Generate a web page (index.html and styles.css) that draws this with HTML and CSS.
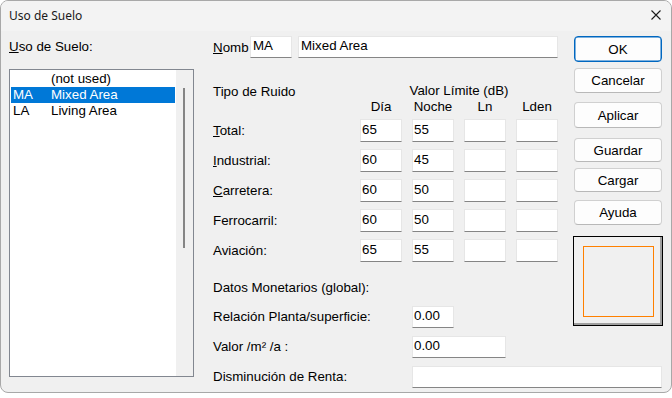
FILE: index.html
```html
<!DOCTYPE html>
<html lang="es">
<head>
<meta charset="utf-8">
<title>Uso de Suelo</title>
<link rel="stylesheet" href="styles.css">
</head>
<body>
<div class="window">
  <div class="titlebar">
    <span class="title">Uso de Suelo</span>
    <svg class="close" width="10" height="10" viewBox="0 0 10 10"><path d="M0.5 0.5 L9.5 9.5 M9.5 0.5 L0.5 9.5" stroke="#1b1b1b" stroke-width="1.1" fill="none"/></svg>
  </div>
  <div class="main">
    <div class="left">
      <div class="lbl top-lbl"><u>U</u>so de Suelo:</div>
      <div class="listbox">
        <div class="items">
          <div class="row"><span class="code"></span><span>(not used)</span></div>
          <div class="row sel"><span class="code">MA</span><span>Mixed Area</span></div>
          <div class="row"><span class="code">LA</span><span>Living Area</span></div>
        </div>
        <div class="vscroll"><div class="thumb"></div></div>
      </div>
    </div>
    <div class="right">
      <div class="form">
        <div class="nomb">
          <div class="lbl nomb-lbl"><u>N</u>omb</div>
          <div class="field w-code">MA</div>
          <div class="field w-name">Mixed Area</div>
        </div>
        <div class="noise">
          <div class="lbl">Tipo de Ruido</div>
          <div class="lbl span4 vl">Valor Límite (dB)</div>
          <div></div>
          <div class="lbl hd">Día</div>
          <div class="lbl hd">Noche</div>
          <div class="lbl hd">Ln</div>
          <div class="lbl hd">Lden</div>

          <div class="lbl rl"><u>T</u>otal:</div>
          <div class="field">65</div><div class="field">55</div><div class="field"></div><div class="field"></div>
          <div class="lbl rl"><u>I</u>ndustrial:</div>
          <div class="field">60</div><div class="field">45</div><div class="field"></div><div class="field"></div>
          <div class="lbl rl"><u>C</u>arretera:</div>
          <div class="field">60</div><div class="field">50</div><div class="field"></div><div class="field"></div>
          <div class="lbl rl">Ferrocarril:</div>
          <div class="field">60</div><div class="field">50</div><div class="field"></div><div class="field"></div>
          <div class="lbl rl">Aviación:</div>
          <div class="field">65</div><div class="field">55</div><div class="field"></div><div class="field"></div>
        </div>
        <div class="lbl datos">Datos Monetarios (global):</div>
        <div class="money first">
          <div class="lbl ml">Relación Planta/superficie:</div>
          <div class="field mf w-sm">0.00</div>
        </div>
        <div class="money">
          <div class="lbl ml">Valor /m² /a :</div>
          <div class="field mf w-md">0.00</div>
        </div>
      </div>
      <div class="buttons">
        <div class="btn default b-ok">OK</div>
        <div class="btn b-cancel">Cancelar</div>
        <div class="btn b-apply">Aplicar</div>
        <div class="btn b-save">Guardar</div>
        <div class="btn b-load">Cargar</div>
        <div class="btn b-help">Ayuda</div>
        <div class="preview"><div class="swatch"></div></div>
      </div>
      <div class="money last">
        <div class="lbl ml">Disminución de Renta:</div>
        <div class="field mf w-lg"></div>
      </div>
    </div>
  </div>
</div>
</body>
</html>
```
FILE: styles.css
```css
* { box-sizing: border-box; }
html, body { margin: 0; padding: 0; }
body {
  width: 672px;
  height: 398px;
  background: #ffffff;
  font-family: "Liberation Sans", Arial, sans-serif;
  font-size: 13.33px;
  color: #000;
  overflow: hidden;
}
u { text-decoration: underline; text-underline-offset: 1px; }

.window {
  width: 672px;
  height: 393px;
  background: #f0f0f0;
  border: 1px solid #a8a8a8;
  border-radius: 8px;
  overflow: hidden;
}
.titlebar {
  height: 30px;
  background: #f3f3f3;
  display: flex;
  align-items: center;
  justify-content: space-between;
  padding: 0 10px 0 8px;
}
.title {
  font-family: "Noto Sans", "Open Sans", sans-serif;
  font-size: 12px;
  color: #1a1a1a;
  margin-top: -1px;
}
.close { display: block; margin-top: -2px; }

.main {
  display: flex;
  padding-left: 8px;
}
.lbl { line-height: 15px; white-space: nowrap; }

.left { width: 185px; }
.top-lbl { margin-top: 8px; line-height: 15px; }
.listbox {
  margin-top: 15px;
  height: 308px;
  border: 1px solid #828790;
  background: #fff;
  display: flex;
}
.items { flex: 1; padding: 1px; }
.row {
  height: 16px;
  line-height: 16px;
  display: flex;
  padding-left: 2px;
}
.row .code { width: 38px; }
.row.sel { background: #0078d7; color: #fff; }
.vscroll {
  width: 17px;
  background: #f0f0f0;
  padding: 18px 0 0 7px;
}
.thumb { width: 2px; height: 160px; background: #858585; }

.right {
  margin-left: 19px;
  padding-top: 5px;
  display: grid;
  grid-template-columns: 345px 88px;
  column-gap: 16px;
  align-content: start;
}

.field {
  height: 23px;
  background: #fff;
  border: 1px solid #e6e6e6;
  border-bottom-color: #858585;
  line-height: 19px;
  padding-left: 1px;
  white-space: nowrap;
  overflow: hidden;
}

.nomb { display: flex; align-items: center; height: 22px; }
.nomb .field { height: 22px; line-height: 18px; padding-left: 2px; }
.nomb-lbl { width: 37px; overflow: hidden; }
.w-code { width: 42px; }
.w-name { width: 260px; margin-left: 6px; }

.noise {
  margin-top: 26px;
  display: grid;
  grid-template-columns: 137px 42px 42px 42px 42px;
  grid-template-rows: 15px 20px repeat(4, 30px) 23px;
  column-gap: 10px;
}
.span4 { grid-column: span 4; text-align: center; }
.vl { margin-top: -1px; }
.hd { text-align: center; }
.rl { line-height: 23px; height: 23px; }

.datos { margin-top: 18px; }
.money {
  display: flex;
  align-items: center;
  height: 22px;
  margin-top: 8px;
}
.money.first { margin-top: 11px; }
.money .ml { width: 199px; line-height: 22px; }
.mf { height: 22px; line-height: 18px; }
.w-sm { width: 42px; }
.w-md { width: 94px; }
.w-lg { width: 250px; }
.money.last { grid-column: 1 / span 2; margin-top: 8px; }

.buttons { display: flex; flex-direction: column; }
.btn {
  height: 25px;
  background: #fdfdfd;
  border: 1px solid #d0d0d0;
  border-bottom-color: #b8b8b8;
  border-radius: 4px;
  display: flex;
  align-items: center;
  justify-content: center;
}
.btn.default { border: 1px solid #0067c0; box-shadow: inset 0 0 0 0.5px #0067c0; }
.b-ok { height: 26px; }
.b-cancel { margin-top: 6px; height: 25px; }
.b-apply { margin-top: 9px; height: 26px; }
.b-save { margin-top: 10px; height: 24px; }
.b-load { margin-top: 6px; height: 24px; }
.b-help { margin-top: 8px; height: 25px; }
.preview {
  margin-top: 11px;
  margin-left: -1px;
  width: 90px;
  height: 90px;
  border: 1px solid #000;
  background: #f0f0f0;
  box-shadow: inset -2px -2px 0 #a0a0a0;
  padding: 9px 0 0 9px;
}
.swatch {
  width: 71px;
  height: 71px;
  border: 1px solid #ff8000;
}
```
